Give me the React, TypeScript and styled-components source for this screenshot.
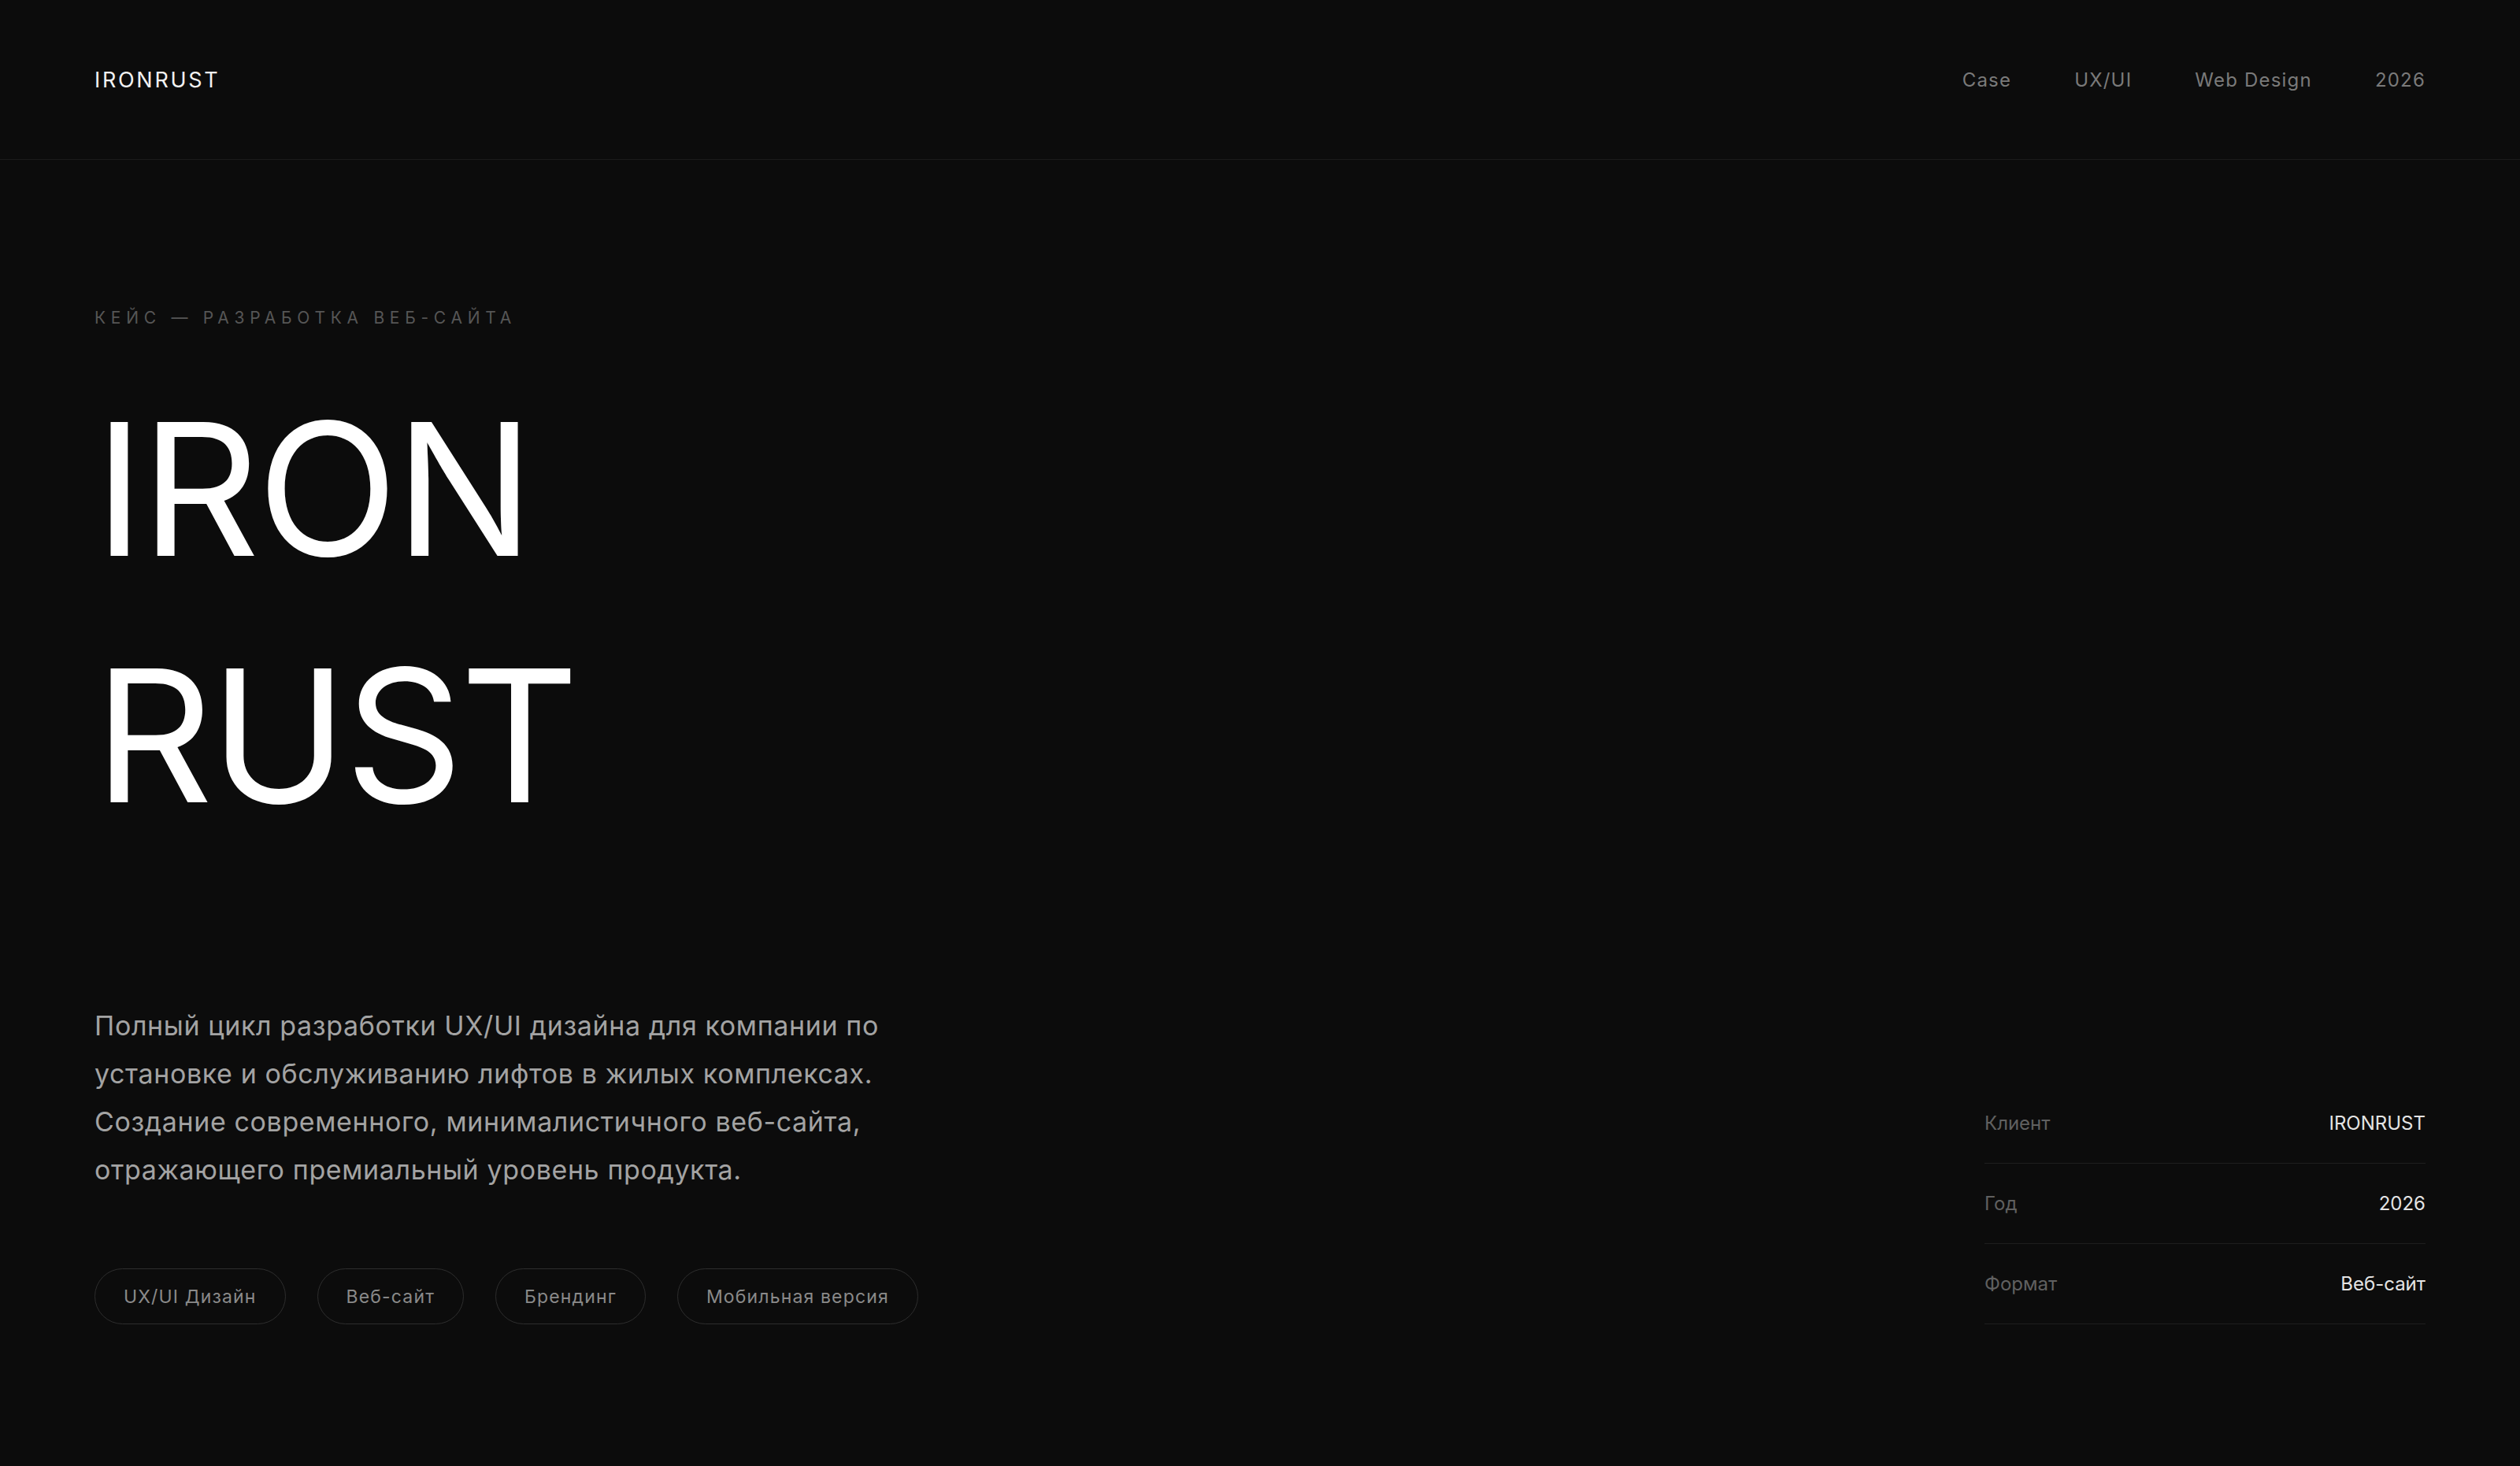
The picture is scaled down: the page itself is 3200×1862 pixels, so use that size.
import React from 'react'
import styled, { createGlobalStyle } from 'styled-components'

const GlobalStyle = createGlobalStyle`
  html, body {
    margin: 0;
    background: #0c0c0c;
  }
  body {
    font-family: Inter, "Noto Sans", sans-serif;
    color: #fff;
    -webkit-font-smoothing: antialiased;
  }
  * { box-sizing: border-box; }
`

const Page = styled.div`
  min-height: 100vh;
  display: flex;
  flex-direction: column;
`

const Header = styled.header`
  height: 203px;
  padding: 0 120px;
  display: flex;
  align-items: center;
  justify-content: space-between;
  border-bottom: 1px solid #1b1b1b;
`

const Logo = styled.div`
  font-size: 27px;
  letter-spacing: 0.1em;
  color: #f2f2f2;
`

const Nav = styled.nav`
  display: flex;
  gap: 80px;
`

const NavItem = styled.span`
  font-size: 24px;
  letter-spacing: 0.05em;
  color: #7a7a7a;
`

const Hero = styled.main`
  flex: 1;
  display: flex;
  flex-direction: column;
  padding: 185px 120px 180px;
`

const Eyebrow = styled.p`
  margin: 0;
  font-size: 21px;
  line-height: 32px;
  letter-spacing: 0.32em;
  text-transform: uppercase;
  color: #565656;
`

const Title = styled.h1`
  margin: 44px 0 0;
  font-size: 234px;
  line-height: 313px;
  font-weight: 400;
  letter-spacing: -0.015em;
  color: #fff;

  span {
    display: block;
  }
`

const Bottom = styled.section`
  margin-top: auto;
  display: flex;
  justify-content: space-between;
  align-items: flex-end;
`

const Intro = styled.div`
  display: flex;
  flex-direction: column;
`

const Description = styled.p`
  margin: 0;
  max-width: 1060px;
  font-size: 34px;
  line-height: 61px;
  letter-spacing: 0.018em;
  color: #a3a3a3;
`

const Tags = styled.div`
  display: flex;
  gap: 40px;
  margin-top: 95px;
`

const Tag = styled.span`
  height: 71px;
  padding: 1px 36px 0;
  display: inline-flex;
  align-items: center;
  border: 1px solid #2d2d2d;
  border-radius: 999px;
  font-size: 23px;
  letter-spacing: 0.05em;
  color: #8a8a8a;
`

const Meta = styled.dl`
  margin: 0;
  width: 560px;
`

const MetaRow = styled.div`
  display: flex;
  justify-content: space-between;
  padding: 33px 0;
  line-height: 35px;
  font-size: 24px;
  border-bottom: 1px solid #1e1e1e;
`

const MetaLabel = styled.dt`
  color: #606060;
`

const MetaValue = styled.dd`
  margin: 0;
  color: #e4e4e4;
`

const navItems = ['Case', 'UX/UI', 'Web Design', '2026']
const tags = ['UX/UI Дизайн', 'Веб-сайт', 'Брендинг', 'Мобильная версия']
const meta = [
  ['Клиент', 'IRONRUST'],
  ['Год', '2026'],
  ['Формат', 'Веб-сайт'],
]

export default function App() {
  return (
    <Page>
      <GlobalStyle />
      <Header>
        <Logo>IRONRUST</Logo>
        <Nav>
          {navItems.map((item) => (
            <NavItem key={item}>{item}</NavItem>
          ))}
        </Nav>
      </Header>
      <Hero>
        <Eyebrow>Кейс — Разработка веб-сайта</Eyebrow>
        <Title>
          <span>IRON</span>
          <span>RUST</span>
        </Title>
        <Bottom>
          <Intro>
            <Description>
              Полный цикл разработки UX/UI дизайна для компании по установке и
              обслуживанию лифтов в жилых комплексах. Создание современного,
              минималистичного веб-сайта, отражающего премиальный уровень
              продукта.
            </Description>
            <Tags>
              {tags.map((tag) => (
                <Tag key={tag}>{tag}</Tag>
              ))}
            </Tags>
          </Intro>
          <Meta>
            {meta.map(([label, value]) => (
              <MetaRow key={label}>
                <MetaLabel>{label}</MetaLabel>
                <MetaValue>{value}</MetaValue>
              </MetaRow>
            ))}
          </Meta>
        </Bottom>
      </Hero>
    </Page>
  )
}
